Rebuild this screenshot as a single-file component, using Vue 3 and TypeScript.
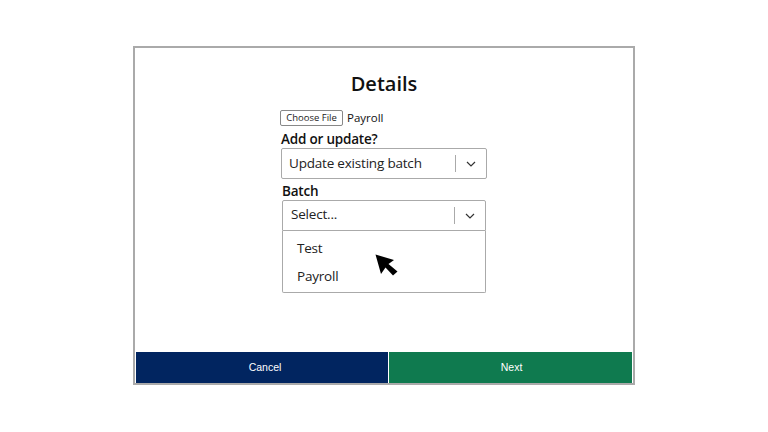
<script setup lang="ts">
const options: string[] = ['Test', 'Payroll']
</script>

<template>
  <div class="page">
    <section class="card">
      <div class="body">
        <h1 class="title">Details</h1>
        <div class="form">
          <div class="file-row">
            <button class="file-btn" type="button">Choose File</button>
            <span class="file-name">Payroll</span>
          </div>
          <div class="label">Add or update?</div>
          <div class="select">
            <span class="value">Update existing batch</span>
            <span class="sep"></span>
            <svg class="chev" width="10" height="6" viewBox="0 0 10 6"><path d="M1 1l4 4 4-4" fill="none" stroke="#333" stroke-width="1.2" /></svg>
          </div>
          <div class="batch">
            <div class="label batch-label">Batch</div>
            <div class="select select-batch">
              <span class="value batch-value">Select...</span>
              <span class="sep"></span>
              <svg class="chev" width="10" height="6" viewBox="0 0 10 6"><path d="M1 1l4 4 4-4" fill="none" stroke="#333" stroke-width="1.2" /></svg>
            </div>
            <ul class="menu">
              <li v-for="o in options" :key="o" class="option">{{ o }}</li>
            </ul>
            <svg class="cursor" width="24" height="24" viewBox="0 0 24 24">
              <path d="M1.5 1.5L20 7 14.5 11 23.5 18.5 19 22.5 11.5 14.5 7 21Z" fill="#000" />
            </svg>
          </div>
        </div>
      </div>
      <div class="actions">
        <button class="action cancel" type="button">Cancel</button>
        <button class="action next" type="button">Next</button>
      </div>
    </section>
  </div>
</template>

<style>
html, body { margin: 0; background: #fff; }
</style>

<style scoped>
.page {
  width: 768px;
  height: 432px;
  padding: 46px 0 0 133px;
  box-sizing: border-box;
  font-family: "Open Sans", "Noto Sans", sans-serif;
  color: #111;
}
.card {
  width: 502px;
  height: 339px;
  box-sizing: border-box;
  border: 2px solid #aaa;
  padding: 1px 1px 0;
  display: flex;
  flex-direction: column;
}
.body {
  flex: 1;
  display: flex;
  flex-direction: column;
  align-items: center;
}
.title {
  margin: 21px 0 0;
  font-size: 20px;
  line-height: 28px;
  font-weight: 600;
  color: #111;
}
.form {
  width: 208px;
  margin: 11px 0 0;
}
.file-row {
  display: flex;
  align-items: center;
  gap: 4px;
  height: 18px;
}
.file-btn {
  width: 63px;
  height: 16px;
  padding: 0;
  background: #fff;
  border: 1px solid #888;
  border-radius: 2px;
  font: 9.5px/14px "Open Sans", sans-serif;
  color: #222;
}
.file-name { font-size: 11.5px; line-height: 18px; }
.label {
  font-size: 13.5px;
  letter-spacing: -0.2px;
  line-height: 18px;
  font-weight: 600;
  margin: 3px 0 0 1px;
  color: #111;
}
.select {
  width: 206px;
  height: 31px;
  margin-left: 1px;
  box-sizing: border-box;
  border: 1.5px solid #aaa;
  border-radius: 2px;
  display: flex;
  align-items: center;
  padding: 0 10px 0 7px;
  background: #fff;
}
.value {
  flex: 1;
  font-size: 13.5px;
  letter-spacing: -0.2px;
  line-height: 20px;
  padding-bottom: 1px;
  color: #222;
}
.batch-value { padding-bottom: 3px; }
.sep { width: 1.5px; height: 17px; background: #aaa; margin-right: 10px; }
.chev { flex: none; }
.batch {
  position: relative;
  width: 205px;
  margin: 3px 0 0 2px;
}
.batch-label { margin: 1px 0 0; }
.select-batch {
  width: 204px;
  margin-left: 0;
  padding-left: 8px;
  border-radius: 2px 2px 0 0;
}
.menu {
  list-style: none;
  margin: 0;
  padding: 4px 0 0;
  width: 204px;
  height: 62px;
  box-sizing: border-box;
  border: 1.5px solid #aaa;
  border-top: 0;
  border-radius: 0 0 2px 2px;
}
.option {
  font-size: 13.5px;
  letter-spacing: -0.2px;
  line-height: 27.5px;
  padding-left: 14px;
  color: #222;
}
.cursor {
  position: absolute;
  left: 92px;
  top: 71px;
}
.actions {
  display: flex;
  gap: 1px;
  height: 31px;
  flex: none;
}
.action {
  border: 0;
  padding: 0;
  color: #fff;
  font: 10.5px/31px "Liberation Sans", Arial, sans-serif;
}
.cancel { width: 252px; padding-left: 6px; background: #012560; }
.next { flex: 1; padding-left: 2px; background: #0f7a4f; }
</style>
